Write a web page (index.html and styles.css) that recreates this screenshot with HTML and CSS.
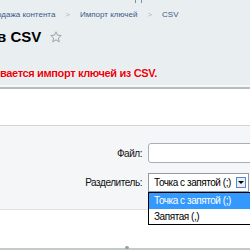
FILE: index.html
```html
<!DOCTYPE html>
<html>
<head>
    <title>Импорт ключей из CSV</title>
    <link rel="stylesheet" href="styles.css">
</head>
<body>
<div class="page">
    <div class="top">
        <div class="tick"></div>
        <div class="breadcrumb">
            <a href="#">одажа контента</a>
            <span class="sep">&gt;</span>
            <a href="#">Импорт ключей</a>
            <span class="sep">&gt;</span>
            <a href="#">CSV</a>
        </div>
        <h1 class="title">
            <span>в CSV</span>
            <svg class="star" width="12" height="12" viewBox="0 0 12 12">
                <path d="M6 0.8 L7.5 4.2 L11.2 4.5 L8.4 7 L9.3 10.8 L6 8.8 L2.7 10.8 L3.6 7 L0.8 4.5 L4.5 4.2 Z" fill="none" stroke="#98a4ab" stroke-width="1"/>
            </svg>
        </h1>
        <p class="notice">вается импорт ключей из CSV.</p>
    </div>
    <div class="divider"></div>
    <div class="band"></div>
    <form class="form">
        <div class="row">
            <label for="file">Файл:</label>
            <input type="text" id="file" class="field">
        </div>
        <div class="row">
            <label for="sep">Разделитель:</label>
            <div class="combo">
                <div class="select" id="sep">
                    <span>Точка с запятой (;)</span>
                    <span class="arrow"></span>
                </div>
                <ul class="options">
                    <li class="active">Точка с запятой (;)</li>
                    <li>Запятая (,)</li>
                </ul>
            </div>
        </div>
    </form>
    <div class="footer-space"></div>
    <div class="bottom-bar"><div class="grip"></div></div>
</div>
</body>
</html>
```

FILE: styles.css
```css
body {
    margin: 0;
    font-family: "Liberation Sans", Arial, sans-serif;
    background-color: #fff;
}

.page {
    width: 250px;
    height: 250px;
    overflow: hidden;
}

.top {
    position: relative;
    height: 85px;
    background-color: #e9eef0;
    border-bottom: 2px solid #f5f7f7;
}

.tick {
    position: absolute;
    left: 135px;
    top: 0;
    width: 5px;
    height: 3px;
    border-left: 1px solid #7f8f9c;
    border-right: 1px solid #7f8f9c;
}

.breadcrumb {
    display: flex;
    align-items: center;
    gap: 10px;
    height: 15px;
    padding-top: 7px;
    margin-left: -3px;
    font-size: 8px;
    line-height: 10px;
    white-space: nowrap;
}

.breadcrumb a {
    color: #3b5b87;
    text-decoration: none;
}

.breadcrumb .sep {
    color: #b0bac2;
    font-size: 8px;
}

.title {
    display: flex;
    align-items: center;
    gap: 9px;
    height: 20px;
    margin: 5px 0 0 -3px;
    font-size: 15px;
    font-weight: bold;
    line-height: 20px;
    color: #000;
}

.star {
    margin-top: -1px;
}

.notice {
    margin: 19px 0 0;
    font-size: 11px;
    font-weight: bold;
    line-height: 14px;
    letter-spacing: -0.35px;
    color: #e8000b;
    text-shadow: 0 0 2px #fff, 0 0 1px #fff;
    white-space: nowrap;
}

.divider {
    height: 2px;
    background-color: #b6bebe;
}

.band {
    height: 36px;
    background-color: #fff;
    border-bottom: 1px solid #d0d6d9;
}

.form {
    height: 84px;
    box-sizing: border-box;
    padding-top: 17px;
    background-color: #f4f6f8;
    border-bottom: 1px solid #dfe4e7;
    font-size: 10px;
    letter-spacing: -0.45px;
}

.row {
    display: grid;
    grid-template-columns: 142px 120px;
    column-gap: 6px;
    align-items: center;
    margin-bottom: 10px;
}

.row label {
    text-align: right;
    color: #111;
}

.field {
    height: 20px;
    box-sizing: border-box;
    border: 1px solid #a9b0b5;
    border-radius: 3px;
    background-color: #fff;
}

.combo {
    position: relative;
}

.select {
    display: flex;
    align-items: center;
    justify-content: space-between;
    width: 101px;
    height: 19px;
    box-sizing: border-box;
    border: 1px solid #8f9aa3;
    background-color: #fff;
    padding: 0 2px 0 5px;
    white-space: nowrap;
}

.arrow {
    position: relative;
    width: 10px;
    height: 11px;
    box-sizing: border-box;
    border: 1px solid #5d86c4;
    background-color: #e6eef8;
}

.arrow::after {
    content: "";
    position: absolute;
    left: 1px;
    top: 3px;
    border-left: 3px solid transparent;
    border-right: 3px solid transparent;
    border-top: 3px solid #000;
}

.options {
    position: absolute;
    left: 0;
    top: 19px;
    width: 120px;
    margin: 0;
    padding: 0;
    list-style: none;
    background-color: #fff;
    border: 1px solid #000;
    white-space: nowrap;
}

.options li {
    height: 15px;
    line-height: 15px;
    padding-left: 5px;
}

.options li.active {
    height: 16px;
    line-height: 16px;
    background-color: #3399ff;
    color: #fff;
}

.footer-space {
    height: 38px;
}

.bottom-bar {
    position: relative;
    height: 3px;
    background-color: #c4cacc;
}

.grip {
    position: absolute;
    left: 125px;
    top: -2px;
    width: 4px;
    height: 3px;
    border-radius: 2px;
    background-color: #9aa4a8;
}
```
